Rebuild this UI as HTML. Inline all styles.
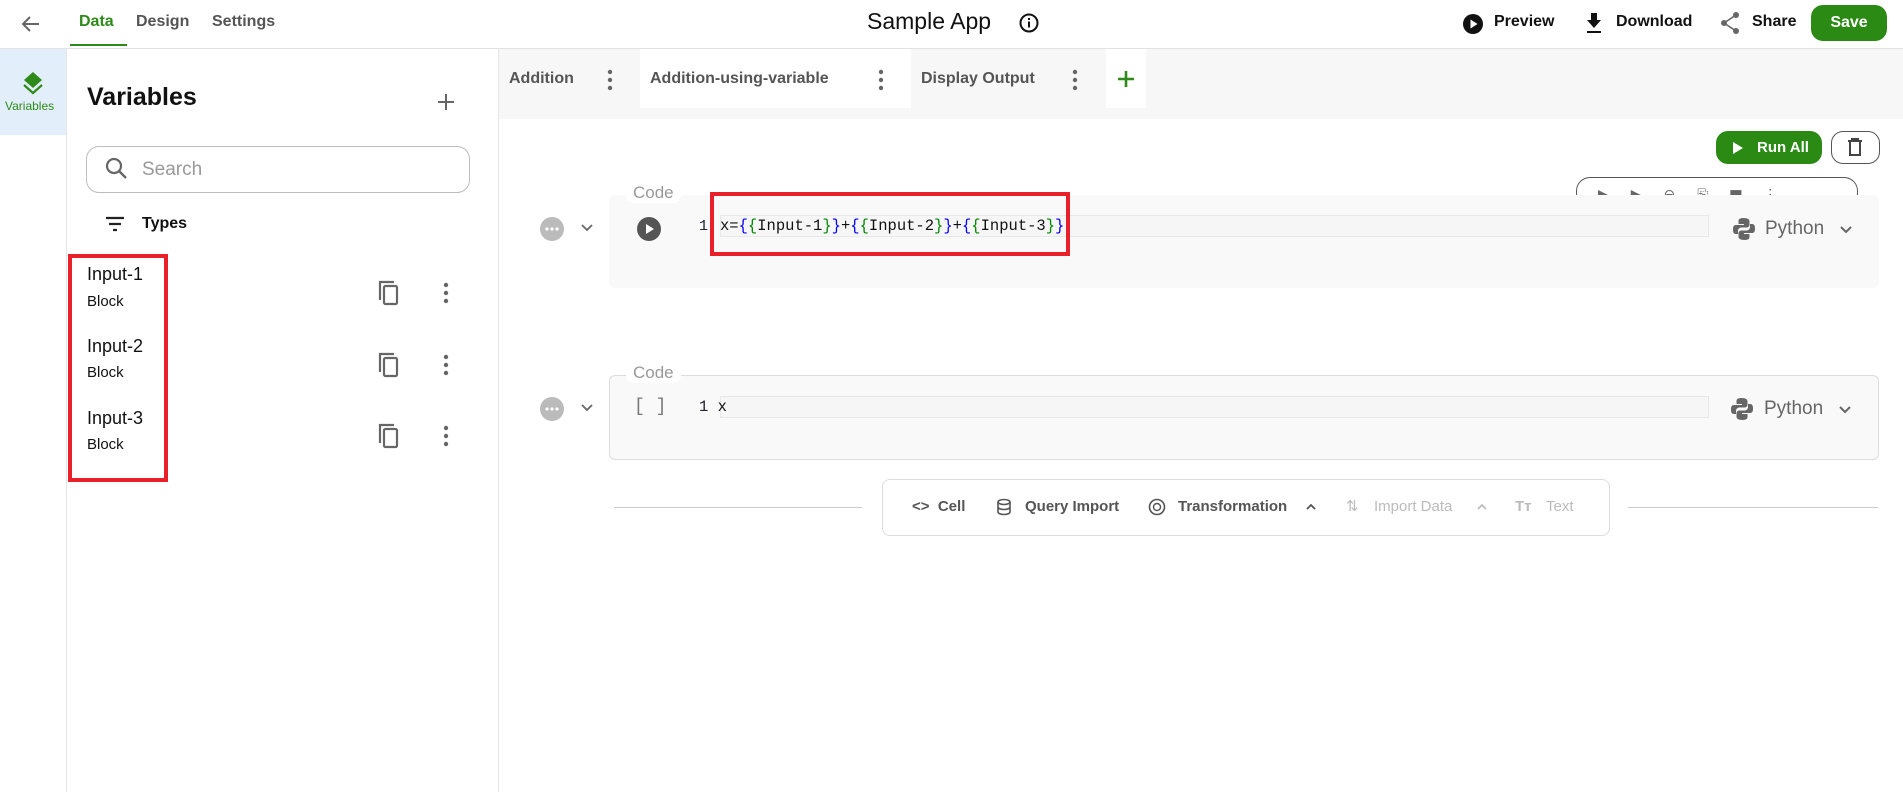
<!DOCTYPE html>
<html><head><meta charset="utf-8"><style>
*{box-sizing:border-box;margin:0;padding:0}
body{width:1903px;height:792px;position:relative;overflow:hidden;background:#fff;font-family:"Liberation Sans",sans-serif;color:#222}
.a{position:absolute;white-space:nowrap}
.g{color:#555}
.mono{font-family:"Liberation Mono",monospace}
</style></head><body>
<!-- top bar -->
<div class="a" style="left:0;top:48px;width:1903px;height:1px;background:#e2e2e2"></div>
<svg class="a" style="left:19px;top:12px" width="24" height="24" viewBox="0 0 24 24"><path d="M20 12H5M11 5l-7 7 7 7" fill="none" stroke="#666" stroke-width="2"/></svg>
<div class="a" style="left:79px;top:13px;font-size:16px;font-weight:bold;color:#2e8b1a">Data</div>
<div class="a" style="left:70px;top:44px;width:57px;height:2px;background:#2e8b1a"></div>
<div class="a g" style="left:136px;top:13px;font-size:16px;font-weight:bold">Design</div>
<div class="a g" style="left:212px;top:13px;font-size:16px;font-weight:bold">Settings</div>
<div class="a" style="left:867px;top:8px;font-size:23px;color:#111">Sample App</div>
<svg class="a" style="left:1018px;top:12px" width="22" height="22" viewBox="0 0 22 22"><circle cx="11" cy="11" r="8.5" fill="none" stroke="#111" stroke-width="2"/><rect x="10" y="9.5" width="2" height="6" fill="#111"/><rect x="10" y="6" width="2" height="2" fill="#111"/></svg>
<svg class="a" style="left:1462px;top:13px" width="22" height="22" viewBox="0 0 22 22"><circle cx="11" cy="11" r="10" fill="#111"/><path d="M8.5 6.5v9l7-4.5z" fill="#fff"/></svg>
<div class="a" style="left:1494px;top:13px;font-size:16px;font-weight:bold;color:#111">Preview</div>
<svg class="a" style="left:1584px;top:11px" width="20" height="24" viewBox="0 0 20 24"><path d="M7 2h6v7h4l-7 8-7-8h4z" fill="#111"/><rect x="3" y="20" width="14" height="2" fill="#111"/></svg>
<div class="a" style="left:1616px;top:13px;font-size:16px;font-weight:bold;color:#111">Download</div>
<svg class="a" style="left:1719px;top:11px" width="22" height="24" viewBox="0 0 22 24"><circle cx="17" cy="4" r="3" fill="#666"/><circle cx="5" cy="12" r="3" fill="#666"/><circle cx="17" cy="20" r="3" fill="#666"/><path d="M17 4L5 12l12 8" fill="none" stroke="#666" stroke-width="1.6"/></svg>
<div class="a" style="left:1752px;top:13px;font-size:16px;font-weight:bold;color:#111">Share</div>
<div class="a" style="left:1811px;top:5px;width:76px;height:36px;background:#2a8a14;border-radius:12px;color:#fff;font-weight:bold;font-size:16px;text-align:center;line-height:36px">Save</div>

<!-- left rail -->
<div class="a" style="left:0;top:49px;width:66px;height:86px;background:#e3eefb"></div>
<div class="a" style="left:66px;top:49px;width:1px;height:743px;background:#e6e6e6"></div>
<svg class="a" style="left:21px;top:70px" width="24" height="26" viewBox="0 0 24 26"><path d="M12 2l9 8-9 8-9-8z" fill="#2e8b1a"/><path d="M3 15l9 8 9-8" fill="none" stroke="#2e8b1a" stroke-width="2.2"/></svg>
<div class="a" style="left:5px;top:99px;font-size:12px;color:#2e8b1a">Variables</div>

<!-- variables panel -->
<div class="a" style="left:498px;top:49px;width:1px;height:743px;background:#e6e6e6"></div>
<div class="a" style="left:87px;top:83px;font-size:25px;font-weight:bold;color:#111">Variables</div>
<svg class="a" style="left:436px;top:92px" width="20" height="20" viewBox="0 0 20 20"><path d="M10 2v16M2 10h16" stroke="#666" stroke-width="2"/></svg>
<div class="a" style="left:86px;top:146px;width:384px;height:47px;border:1px solid #bdbdbd;border-radius:13px"></div>
<svg class="a" style="left:104px;top:156px" width="26" height="26" viewBox="0 0 26 26"><circle cx="10" cy="10" r="7" fill="none" stroke="#666" stroke-width="2.2"/><path d="M15 15l7 7" stroke="#666" stroke-width="2.4"/></svg>
<div class="a" style="left:142px;top:159px;font-size:19px;color:#999">Search</div>
<svg class="a" style="left:104px;top:215px" width="22" height="18" viewBox="0 0 22 18"><path d="M2 3h18M5 9h12M9 15h4" stroke="#222" stroke-width="2.2"/></svg>
<div class="a" style="left:142px;top:215px;font-size:16px;font-weight:bold;color:#111">Types</div>

<div class="a" style="left:87px;top:264px;font-size:18px;color:#111">Input-1</div>
<div class="a" style="left:87px;top:293px;font-size:15px;color:#111">Block</div>
<div class="a" style="left:87px;top:336px;font-size:18px;color:#111">Input-2</div>
<div class="a" style="left:87px;top:364px;font-size:15px;color:#111">Block</div>
<div class="a" style="left:87px;top:408px;font-size:18px;color:#111">Input-3</div>
<div class="a" style="left:87px;top:436px;font-size:15px;color:#111">Block</div>
<svg class="a" style="left:374px;top:278px" width="28" height="30" viewBox="0 0 28 30"><path d="M6 22V4h14" fill="none" stroke="#666" stroke-width="2.2"/><rect x="10" y="8" width="13" height="18" rx="1.5" fill="none" stroke="#666" stroke-width="2.2"/></svg>
<svg class="a" style="left:374px;top:350px" width="28" height="30" viewBox="0 0 28 30"><path d="M6 22V4h14" fill="none" stroke="#666" stroke-width="2.2"/><rect x="10" y="8" width="13" height="18" rx="1.5" fill="none" stroke="#666" stroke-width="2.2"/></svg>
<svg class="a" style="left:374px;top:421px" width="28" height="30" viewBox="0 0 28 30"><path d="M6 22V4h14" fill="none" stroke="#666" stroke-width="2.2"/><rect x="10" y="8" width="13" height="18" rx="1.5" fill="none" stroke="#666" stroke-width="2.2"/></svg>
<svg class="a" style="left:440px;top:280px" width="12" height="26" viewBox="0 0 12 26"><circle cx="6" cy="5" r="2.2" fill="#666"/><circle cx="6" cy="13" r="2.2" fill="#666"/><circle cx="6" cy="21" r="2.2" fill="#666"/></svg>
<svg class="a" style="left:440px;top:352px" width="12" height="26" viewBox="0 0 12 26"><circle cx="6" cy="5" r="2.2" fill="#666"/><circle cx="6" cy="13" r="2.2" fill="#666"/><circle cx="6" cy="21" r="2.2" fill="#666"/></svg>
<svg class="a" style="left:440px;top:423px" width="12" height="26" viewBox="0 0 12 26"><circle cx="6" cy="5" r="2.2" fill="#666"/><circle cx="6" cy="13" r="2.2" fill="#666"/><circle cx="6" cy="21" r="2.2" fill="#666"/></svg>
<div class="a" style="left:68px;top:254px;width:100px;height:228px;border:4px solid #e8202a"></div>

<!-- main tab bar -->
<div class="a" style="left:499px;top:49px;width:1404px;height:70px;background:#f7f7f7"></div>
<div class="a g" style="left:509px;top:70px;font-size:16px;font-weight:bold">Addition</div>
<svg class="a" style="left:604px;top:68px" width="12" height="24" viewBox="0 0 12 24"><circle cx="6" cy="4" r="2.2" fill="#666"/><circle cx="6" cy="12" r="2.2" fill="#666"/><circle cx="6" cy="20" r="2.2" fill="#666"/></svg>
<div class="a" style="left:640px;top:49px;width:271px;height:59px;background:#fff"></div>
<div class="a g" style="left:650px;top:70px;font-size:16px;font-weight:bold">Addition-using-variable</div>
<svg class="a" style="left:875px;top:68px" width="12" height="24" viewBox="0 0 12 24"><circle cx="6" cy="4" r="2.2" fill="#666"/><circle cx="6" cy="12" r="2.2" fill="#666"/><circle cx="6" cy="20" r="2.2" fill="#666"/></svg>
<div class="a g" style="left:921px;top:70px;font-size:16px;font-weight:bold">Display Output</div>
<svg class="a" style="left:1069px;top:68px" width="12" height="24" viewBox="0 0 12 24"><circle cx="6" cy="4" r="2.2" fill="#666"/><circle cx="6" cy="12" r="2.2" fill="#666"/><circle cx="6" cy="20" r="2.2" fill="#666"/></svg>
<div class="a" style="left:1106px;top:49px;width:40px;height:59px;background:#fff"></div>
<svg class="a" style="left:1116px;top:69px" width="20" height="20" viewBox="0 0 20 20"><path d="M10 2v16M2 10h16" stroke="#2e8b1a" stroke-width="2.6"/></svg>

<!-- run all -->
<div class="a" style="left:1716px;top:131px;width:106px;height:33px;background:#2a8a14;border-radius:12px;color:#fff;font-weight:bold;font-size:15px;line-height:33px;padding-left:41px">Run All</div>
<svg class="a" style="left:1731px;top:140px" width="14" height="16" viewBox="0 0 14 16"><path d="M2 2v12l10-6z" fill="#fff"/></svg>
<div class="a" style="left:1831px;top:131px;width:49px;height:33px;border:1px solid #555;border-radius:12px"></div>
<svg class="a" style="left:1845px;top:136px" width="20" height="22" viewBox="0 0 20 22"><path d="M3 5h14M7 5V3h6v2M5 5v14h10V5" fill="none" stroke="#444" stroke-width="2"/></svg>

<!-- cell toolbar -->
<div class="a" style="left:1576px;top:177px;width:282px;height:30px;border:1px solid #555;border-radius:14px"></div>
<div class="a" style="left:1598px;top:186px;font-size:14px;color:#666;letter-spacing:22px">▶▶⊖⎘▆⋮</div>

<!-- cell 1 -->
<div class="a" style="left:609px;top:195px;width:1270px;height:93px;background:#f9f9f9;border-radius:6px"></div>
<div class="a" style="left:626px;top:183px;font-size:17px;color:#999;background:#fff;padding:0 7px;border-radius:8px">Code</div>
<svg class="a" style="left:539px;top:216px" width="26" height="26" viewBox="0 0 26 26"><circle cx="13" cy="13" r="12" fill="#bbb"/><circle cx="8" cy="13" r="1.6" fill="#fff"/><circle cx="13" cy="13" r="1.6" fill="#fff"/><circle cx="18" cy="13" r="1.6" fill="#fff"/></svg>
<svg class="a" style="left:580px;top:222px" width="14" height="12" viewBox="0 0 14 12"><path d="M2 3l5 5 5-5" fill="none" stroke="#666" stroke-width="1.8"/></svg>
<svg class="a" style="left:636px;top:216px" width="26" height="26" viewBox="0 0 26 26"><circle cx="13" cy="13" r="12" fill="#555"/><path d="M10 8v10l8-5z" fill="#fff"/></svg>
<div class="a mono" style="left:699px;top:218px;font-size:15px;color:#223">1</div>
<div class="a" style="left:720px;top:215px;width:989px;height:22px;border:1px solid #e8e8e8;background:#f6f6f6"></div>
<div class="a mono" style="left:720px;top:217px;font-size:15.5px;color:#111">x=<span style="color:#00f">{</span><span style="color:#080">{</span>Input-1<span style="color:#080">}</span><span style="color:#00f">}</span>+<span style="color:#00f">{</span><span style="color:#080">{</span>Input-2<span style="color:#080">}</span><span style="color:#00f">}</span>+<span style="color:#00f">{</span><span style="color:#080">{</span>Input-3<span style="color:#080">}</span><span style="color:#00f">}</span></div>
<div class="a" style="left:710px;top:192px;width:360px;height:64px;border:4px solid #e8202a"></div>
<svg class="a" style="left:1731px;top:216px" width="26" height="26" viewBox="0 0 26 26"><path d="M12.5 2c-5 0-5 2-5 3.5V8h5.5v1H5C2.5 9 2 11 2 13.5S2.5 18 5 18h2v-3c0-2 1.5-3.5 3.5-3.5h5c1.8 0 3-1.3 3-3V5.5C18.5 3.5 17 2 12.5 2z" fill="#666"/><path d="M13.5 24c5 0 5-2 5-3.5V18H13v-1h8c2.5 0 3-2 3-4.5S23.5 8 21 8h-2v3c0 2-1.5 3.5-3.5 3.5h-5c-1.8 0-3 1.3-3 3v3c0 2 1.5 3.5 6 3.5z" fill="#666"/></svg>
<div class="a" style="left:1765px;top:218px;font-size:19px;color:#666">Python</div>
<svg class="a" style="left:1838px;top:224px" width="16" height="12" viewBox="0 0 16 12"><path d="M3 3l5 5 5-5" fill="none" stroke="#666" stroke-width="2"/></svg>

<!-- cell 2 -->
<div class="a" style="left:609px;top:375px;width:1270px;height:85px;background:#f9f9f9;border:1px solid #ddd;border-radius:6px"></div>
<div class="a" style="left:626px;top:363px;font-size:17px;color:#999;background:#fff;padding:0 7px;border-radius:8px">Code</div>
<svg class="a" style="left:539px;top:396px" width="26" height="26" viewBox="0 0 26 26"><circle cx="13" cy="13" r="12" fill="#bbb"/><circle cx="8" cy="13" r="1.6" fill="#fff"/><circle cx="13" cy="13" r="1.6" fill="#fff"/><circle cx="18" cy="13" r="1.6" fill="#fff"/></svg>
<svg class="a" style="left:580px;top:402px" width="14" height="12" viewBox="0 0 14 12"><path d="M2 3l5 5 5-5" fill="none" stroke="#666" stroke-width="1.8"/></svg>
<div class="a mono" style="left:634px;top:397px;font-size:18px;color:#777">[ ]</div>
<div class="a" style="left:720px;top:396px;width:989px;height:22px;border:1px solid #e8e8e8;background:#f6f6f6"></div>
<div class="a mono" style="left:699px;top:398px;font-size:15.5px;color:#223">1&nbsp;<span style="color:#111">x</span></div>
<svg class="a" style="left:1729px;top:396px" width="26" height="26" viewBox="0 0 26 26"><path d="M12.5 2c-5 0-5 2-5 3.5V8h5.5v1H5C2.5 9 2 11 2 13.5S2.5 18 5 18h2v-3c0-2 1.5-3.5 3.5-3.5h5c1.8 0 3-1.3 3-3V5.5C18.5 3.5 17 2 12.5 2z" fill="#666"/><path d="M13.5 24c5 0 5-2 5-3.5V18H13v-1h8c2.5 0 3-2 3-4.5S23.5 8 21 8h-2v3c0 2-1.5 3.5-3.5 3.5h-5c-1.8 0-3 1.3-3 3v3c0 2 1.5 3.5 6 3.5z" fill="#666"/></svg>
<div class="a" style="left:1764px;top:398px;font-size:19px;color:#666">Python</div>
<svg class="a" style="left:1837px;top:404px" width="16" height="12" viewBox="0 0 16 12"><path d="M3 3l5 5 5-5" fill="none" stroke="#666" stroke-width="2"/></svg>

<!-- add bar -->
<div class="a" style="left:614px;top:507px;width:248px;height:1px;background:#ccc"></div>
<div class="a" style="left:1628px;top:507px;width:250px;height:1px;background:#ccc"></div>
<div class="a" style="left:882px;top:479px;width:728px;height:57px;border:1px solid #ddd;border-radius:8px"></div>
<div class="a" style="left:912px;top:498px;font-size:15px;font-weight:bold;color:#555">&lt;&gt;&nbsp;&nbsp;Cell</div>
<svg class="a" style="left:996px;top:498px" width="16" height="18" viewBox="0 0 16 18"><ellipse cx="8" cy="4" rx="6" ry="2.5" fill="none" stroke="#555" stroke-width="1.6"/><path d="M2 4v10c0 1.4 2.7 2.5 6 2.5s6-1.1 6-2.5V4M2 9c0 1.4 2.7 2.5 6 2.5S14 10.4 14 9" fill="none" stroke="#555" stroke-width="1.6"/></svg>
<div class="a" style="left:1025px;top:498px;font-size:15px;font-weight:bold;color:#555">Query Import</div>
<svg class="a" style="left:1148px;top:498px" width="18" height="18" viewBox="0 0 18 18"><circle cx="9" cy="9" r="7.5" fill="none" stroke="#555" stroke-width="1.6"/><circle cx="9" cy="9" r="3.5" fill="none" stroke="#555" stroke-width="1.4"/></svg>
<div class="a" style="left:1178px;top:498px;font-size:15px;font-weight:bold;color:#555">Transformation</div>
<svg class="a" style="left:1305px;top:502px" width="12" height="10" viewBox="0 0 12 10"><path d="M2 7l4-4 4 4" fill="none" stroke="#555" stroke-width="1.8"/></svg>
<div class="a" style="left:1346px;top:497px;font-size:15px;color:#bbb">⇅</div>
<div class="a" style="left:1374px;top:498px;font-size:15px;color:#bbb">Import Data</div>
<svg class="a" style="left:1476px;top:502px" width="12" height="10" viewBox="0 0 12 10"><path d="M2 7l4-4 4 4" fill="none" stroke="#bbb" stroke-width="1.8"/></svg>
<div class="a" style="left:1515px;top:498px;font-size:15px;font-weight:bold;color:#bbb">Tт</div>
<div class="a" style="left:1546px;top:498px;font-size:15px;color:#bbb">Text</div>
</body></html>
